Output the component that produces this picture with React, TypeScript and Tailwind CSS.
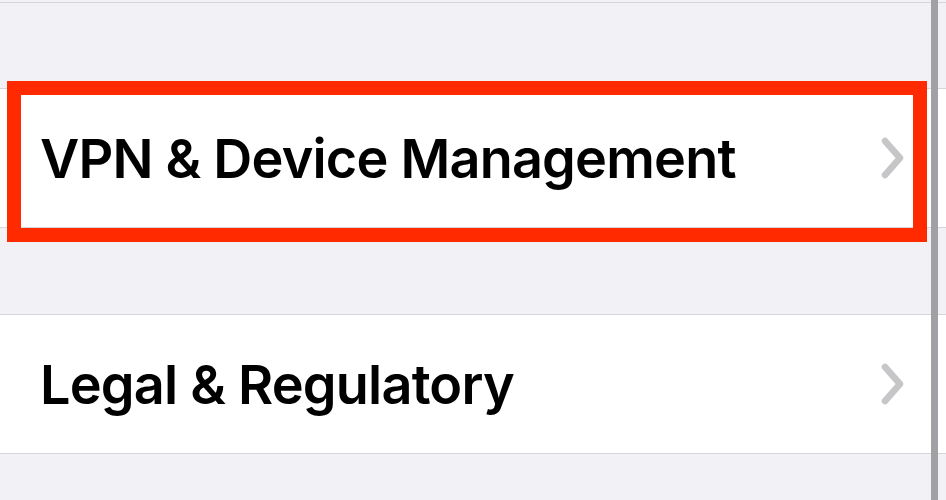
import React from 'react';

const Chevron: React.FC = () => (
  <svg width="28" height="48" viewBox="0 0 28 48" fill="none" className="shrink-0">
    <path d="M6 7 L21 24 L6 41" stroke="#c6c6c9" strokeWidth="6.5" strokeLinecap="round" strokeLinejoin="round" />
  </svg>
);

const Row: React.FC<{ label: string }> = ({ label }) => (
  <div className="h-[140px] bg-white border-y border-[#d6d6da] flex items-center justify-between pl-[40px] pr-[39px]">
    <span className="text-[54px] leading-none font-semibold text-black tracking-[-0.8px] pt-[2px]">{label}</span>
    <Chevron />
  </div>
);

export default function App() {
  return (
    <div
      className="relative w-[946px] h-[500px] overflow-hidden bg-[#f1f1f6]"
      style={{ fontFamily: 'Inter, "Noto Sans", sans-serif' }}
    >
      <div className="h-[3px] border-b border-[#d6d6da]" />
      <div className="h-[85px]" />
      <Row label="VPN & Device Management" />
      <div className="h-[86px]" />
      <Row label="Legal & Regulatory" />

      {/* red highlight */}
      <div className="absolute left-[7px] top-[81px] w-[920px] h-[161px] border-[14px] border-[#ff2a00]" />
      {/* scrollbar */}
      <div className="absolute left-[931px] top-0 w-[7px] h-full bg-[#a1a1a5]" />
    </div>
  );
}
